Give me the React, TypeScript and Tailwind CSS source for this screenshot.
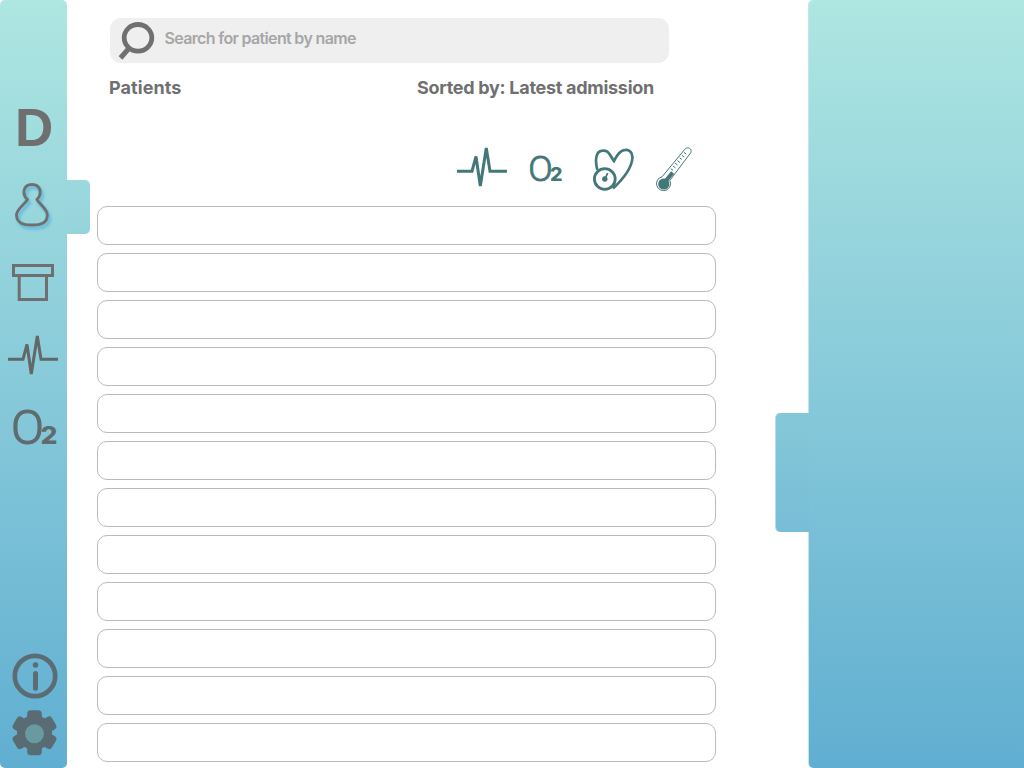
import React from 'react';

function Pulse({ className }: { className: string }) {
  return (
    <svg className={className} viewBox="0 0 50 42" fill="none" stroke="currentColor" strokeWidth="3">
      <path d="M0 25.2H15L19 10.5L23.3 40L29.3 2L33 25.2H50" />
    </svg>
  );
}

function Oxygen({ className }: { className: string }) {
  return (
    <svg className={className} viewBox="0 0 46 38" fill="currentColor">
      <text y="36.3" fontFamily="Roboto, sans-serif">
        <tspan x="-1.1" fontSize="48.5" fontWeight="300" textLength="33" lengthAdjust="spacingAndGlyphs" stroke="currentColor" strokeWidth="1.2">O</tspan>
        <tspan x="28.6" fontSize="24.5" fontWeight="800" fontFamily="Inter, sans-serif" textLength="17" lengthAdjust="spacingAndGlyphs">2</tspan>
      </text>
    </svg>
  );
}

function PressureIcon() {
  return (
    <svg className="ml-[30px] mt-[2px] h-[44px] w-[42px] shrink-0" viewBox="593 148 42 44" fill="none" stroke="currentColor" strokeWidth="2.7">
      <path d="M597.3 170C596 165 595.6 160 596.6 156C598 150.5 602 150.2 605.5 150.8C610 152.3 611 157.5 614 161C616.5 156.5 619 151 624 150.2C629 149 632.8 152.5 632.4 158C631.8 169 622 180 613 188.5" />
      <circle cx="604.8" cy="179" r="10.4" strokeWidth="2.8" />
      <circle cx="604.8" cy="179" r="2.7" fill="currentColor" stroke="none" />
      <path d="M605 179L607.6 173" strokeWidth="1.8" />
    </svg>
  );
}

function ThermometerIcon() {
  return (
    <svg className="ml-[20px] h-[48px] w-[38px] shrink-0" viewBox="655 146 38 48" fill="none" stroke="currentColor">
      <path d="M662 176.8L684.8 149.3C688.4 145.7 693 149.7 690.4 153.2L669.8 180.5A7 7 0 1 1 662 176.8Z" strokeWidth="1" />
      <circle cx="663.8" cy="184" r="5.6" fill="currentColor" stroke="none" />
      <path d="M665 182L672.6 172.6" strokeWidth="4" />
      <path d="M670.8 168.8l2.2 1.5M673 166l2.4 1.8M675.2 163.3l2.2 1.5M677.4 160.6l2.5 1.8M679.6 157.9l2.2 1.5M681.8 155.2l2.4 1.8M684 152.5l2.2 1.5" strokeWidth="1" />
    </svg>
  );
}

function Sidebar() {
  return (
    <aside className="relative flex h-full w-[67px] shrink-0 flex-col rounded-[5px] bg-linear-to-b from-[#aee6e1] to-[#60aed1] text-[#6f6f6f]">
      <div className="mt-[98px] h-[60px] pl-[15px] font-['Liberation_Sans',sans-serif] text-[53px] leading-[60px] font-bold">D</div>
      <svg className="mt-[20px] ml-[12px] h-[56px] w-[43px]" viewBox="12 178 43 56" fill="none" stroke="currentColor" strokeWidth="2.8" strokeLinejoin="round">
        <path className="drop-shadow-[2px_3px_1.5px_#5fb4da]" d="M27.5 199.5C22 195 22.5 184.5 32 184.5C41.5 184.5 42 195 36.8 199.5C39.5 204 47 209 47.3 214.5C47.5 223 41 225 32 225C23 225 16.3 223 16.5 214.5C17 209 24.8 204 27.5 199.5Z" />
      </svg>
      <svg className="mt-[28px] ml-[11px] h-[42px] w-[45px]" viewBox="11 262 45 42" fill="none" stroke="currentColor" strokeWidth="3">
        <rect x="13.5" y="265.5" width="39" height="10" />
        <path d="M19.2 277V299.5H46.5V277" />
      </svg>
      <Pulse className="mt-[30px] ml-[8px] h-[42px] w-[50px] text-[#626767]" />
      <Oxygen className="mt-[32px] ml-[12px] h-[38px] w-[46px] overflow-visible text-[#606b6f]" />
      <svg className="mt-[207px] ml-[12px] h-[47px] w-[47px] text-[#5b6c74]" viewBox="12 653 47 47" fill="none" stroke="currentColor">
        <circle cx="35" cy="676" r="20.2" strokeWidth="4.7" />
        <circle cx="35.5" cy="665" r="2.8" fill="currentColor" stroke="none" />
        <path d="M35.5 673.5V688.2" strokeWidth="5" strokeLinecap="round" />
      </svg>
      <svg className="mt-[9px] ml-[12px] h-[47px] w-[46px] text-[#596c74]" viewBox="12 709 46 47">
        <g fill="currentColor">
          <circle cx="34.5" cy="732.7" r="17.5" />
          <rect x="27.2" y="710.2" width="14.6" height="45" rx="3.5" />
          <rect x="27.2" y="710.2" width="14.6" height="45" rx="3.5" transform="rotate(60 34.5 732.7)" />
          <rect x="27.2" y="710.2" width="14.6" height="45" rx="3.5" transform="rotate(120 34.5 732.7)" />
        </g>
        <circle cx="34.5" cy="733.7" r="9.5" fill="#6a9aa1" />
      </svg>
      <div className="absolute top-[180px] left-full h-[54px] w-[23px] rounded-r-[5px] bg-linear-to-b from-[#9cd9df] to-[#96d4dc]" />
    </aside>
  );
}

export default function App() {
  return (
    <div className="flex h-[768px] w-[1024px] overflow-hidden bg-white font-['Inter',sans-serif] text-[#707070]">
      <Sidebar />
      <main className="flex flex-1 flex-col pl-[30px]">
        <div className="mt-[18px] ml-[13px] flex h-[45px] w-[559px] items-center rounded-[11px] bg-[#efefef]">
          <svg className="ml-[8px] h-[40px] w-[38px]" viewBox="118 20 38 40" fill="none" stroke="#707070">
            <ellipse cx="138" cy="36.8" rx="13.8" ry="13.3" strokeWidth="4.8" />
            <path d="M128.8 47.5L120.5 57" strokeWidth="5" />
          </svg>
          <span className="-mt-[5px] ml-[8.5px] text-[16px] leading-[20px] font-semibold tracking-[-0.66px] whitespace-nowrap text-[#a6a6a6]">Search for patient by name</span>
        </div>
        <div className="mt-[13px] ml-[12px] flex h-[24px] items-center text-[18px] leading-[24px] font-bold whitespace-nowrap">
          <h1 className="w-[308px] tracking-[0.08px]">Patients</h1>
          <p className="tracking-[-0.28px]">Sorted by: Latest admission</p>
        </div>
        <div className="mt-[46px] ml-[360px] flex h-[48px] text-[#447777]">
          <Pulse className="h-[42px] w-[50px] shrink-0" />
          <Oxygen className="mt-[7px] ml-[22px] h-[31px] w-[34px] shrink-0 overflow-visible" />
          <PressureIcon />
          <ThermometerIcon />
        </div>
        <ul className="mt-[12px] flex w-[619px] flex-col gap-2">
          {Array.from({ length: 12 }, (_, i) => (
            <li key={i} className="h-[39px] rounded-[10px] border border-[#bbbbbb] bg-white" />
          ))}
        </ul>
      </main>
      <aside className="relative h-full w-[216px] shrink-0 rounded-l-[5px] border-l border-[#c5e4ea] bg-linear-to-b from-[#aee6e1] to-[#60aed1]">
        <div className="absolute top-[413px] right-full h-[119px] w-[34px] rounded-l-[5px] border-l border-[#b8dee8] bg-linear-to-b from-[#84c8d8] to-[#78bdd6]" />
      </aside>
    </div>
  );
}
